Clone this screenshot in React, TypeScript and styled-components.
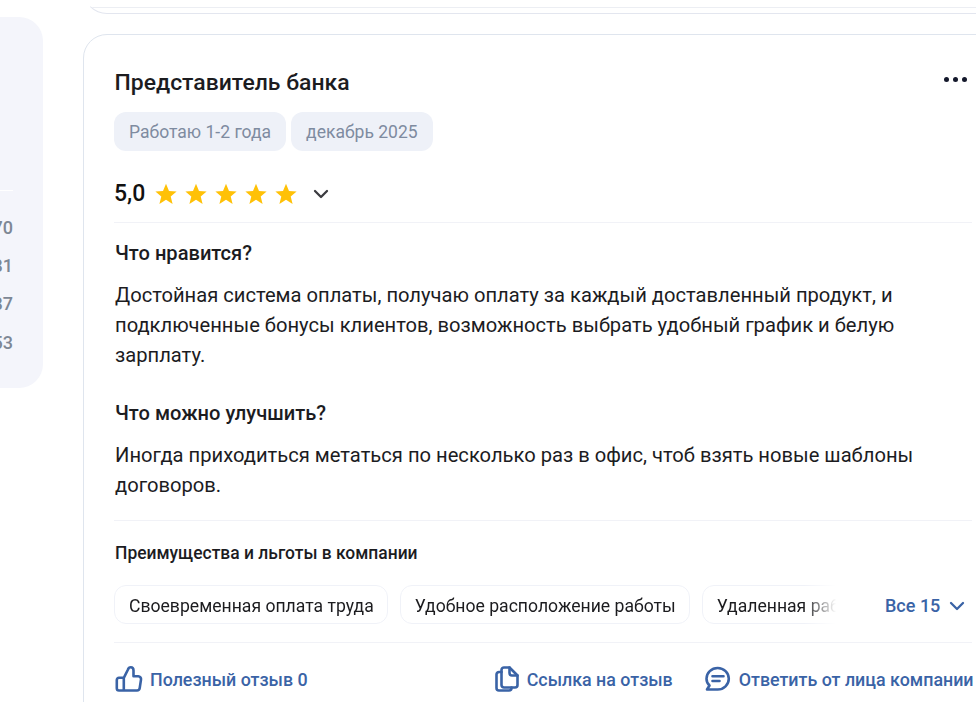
import React from "react";
import styled, { createGlobalStyle } from "styled-components";

const Global = createGlobalStyle`
  html, body { margin: 0; padding: 0; background: #fff; }
  body { font-family: Roboto, "Noto Sans", sans-serif; overflow: hidden; }
`;
const Page = styled.div`
  width: 976px; height: 702px; overflow: hidden; display: flex; align-items: flex-start; background: #fff;
`;
const Side = styled.aside`
  flex: none; width: 43px; height: 371px; margin-top: 17px; background: #f4f5fb;
  border-radius: 0 24px 24px 0; display: flex; flex-direction: column; align-items: flex-end;
  padding: 173px 0 0; box-sizing: border-box; overflow: hidden;
`;
const SideRule = styled.div`
  height: 1px; background: #fff; width: 13px; align-self: flex-start;
`;
const SideNums = styled.div`
  align-self: flex-start; width: 13px; display: flex; flex-direction: column; align-items: flex-end; margin-top: 18px;
`;
const SideNum = styled.div`
  font-size: 18px; font-weight: 500; line-height: 38.2px; height: 38.2px; color: #7d8795; white-space: nowrap;
  width: 13px; display: flex; justify-content: flex-end; overflow: hidden;
`;
const Main = styled.main`
  flex: none; width: 920px; margin-left: 40px; display: flex; flex-direction: column;
`;
const PrevCard = styled.div`
  height: 38px; margin-top: -24px; box-sizing: border-box; border: 1px solid #e3e6ef; border-top: 0; border-left-color: transparent;
  border-radius: 0 0 24px 24px; position: relative; overflow: hidden; display: flex; flex-direction: column; justify-content: flex-end;
`;
const PrevRule = styled.div`
  height: 1px; background: #eceef3; margin-bottom: 5px;
`;
const Card = styled.article`
  margin-top: 20px; box-sizing: border-box; border: 1px solid #dfe5ee; border-radius: 24px; padding: 30px 30px 0; height: 720px; background: #fff;
`;
const Head = styled.div`
  display: flex; justify-content: space-between; align-items: center; height: 34px;
`;
const Title = styled.h2`
  margin: 1px 0 0; padding-left: 0.5px; font-size: 22.95px; font-weight: 500; line-height: 34px; color: #1c1c1f;
`;
const Dots = styled.div`
  display: flex; gap: 3.8px; margin-right: 5px; margin-top: -5px;
`;
const Dot = styled.span`
  width: 5px; height: 5px; border-radius: 50%; background: #14182b;
`;
const Tags = styled.div`
  display: flex; gap: 5px; margin-top: 13px;
`;
const Tag = styled.span`
  height: 39px; display: flex; align-items: center; padding: 0 15px; border-radius: 12px; background: #eef1f8; font-size: 17.55px; color: #7e8ba0;
`;
const Rating = styled.div`
  display: flex; align-items: center; height: 32px; margin-top: 27px;
`;
const Score = styled.span`
  font-size: 23px; font-weight: 500; color: #111; width: 41px; line-height: 32px;
`;
const Stars = styled.div`
  display: flex; gap: 8px;
`;
const Caret = styled.svg<{ $m?: number }>`
  flex: none; margin-left: ${p => p.$m ?? 0}px;
`;
const Rule = styled.div<{ $top: number }>`
  height: 1px; background: #f1f2f7; margin-top: ${p => p.$top}px;
`;
const SectionTitle = styled.h3<{ $top: number }>`
  margin: ${p => p.$top}px 0 0; padding-left: 1px; font-size: 20.1px; font-weight: 500; line-height: 30px; color: #1c1c1f;
`;
const Body = styled.p`
  margin: 12px 0 0; padding-left: 1px; font-size: 20.16px; line-height: 30px; color: #1c1c1f;
`;
const Benefits = styled.h4`
  margin: 17px 0 0; padding-left: 1px; font-size: 17.45px; font-weight: 500; line-height: 30px; color: #1c1c1f;
`;
const ChipRow = styled.div`
  display: flex; align-items: center; margin-top: 17px; height: 39px;
`;
const ChipTrack = styled.div`
  width: 728px; display: flex; gap: 12px; overflow: hidden; flex: none;
  mask-image: linear-gradient(to right, #000 690px, transparent 722px);
`;
const Chip = styled.span`
  flex: none; height: 39px; box-sizing: border-box; border: 1px solid #f0f2f8; border-radius: 12px; padding: 2px 13px 0 14px; display: flex; align-items: center; font-size: 17.6px; color: #1c1c1f; white-space: nowrap;
`;
const More = styled.div`
  display: flex; align-items: center; margin-left: 43px; padding-top: 2px; font-size: 18px; font-weight: 500; color: #3a63a6;
`;
const Actions = styled.div`
  display: flex; align-items: center; margin-top: 19px; height: 34px;
`;
const Action = styled.div<{ $m: number; $gap: number }>`
  display: flex; align-items: center; gap: ${p => p.$gap}px; margin-left: ${p => p.$m}px; font-size: 17.85px; font-weight: 500; color: #3a63a6; white-space: nowrap;
`;

const Star = () => (
  <svg width="22" height="22" viewBox="0 0 22 22"><path fill="#ffc107" d="M11 .8l3 7.2 7.6.5-5.9 4.9 1.900 7.500L11 16.800l-6.600 4.100 1.900-7.500L.4 8.500 8 8z" /></svg>
);
const Chevron = ({ c, m }: { c: string; m: number }) => (
  <Caret $m={m} width="16" height="10" viewBox="0 0 16 10"><path d="M2 2l6 6 6-6" fill="none" stroke={c} strokeWidth="2.3" strokeLinecap="round" strokeLinejoin="round" /></Caret>
);
const Thumb = () => (
  <svg width="28" height="26" viewBox="0 0 28 26" fill="none" stroke="#3a63a6" strokeWidth="2.6" strokeLinejoin="round" strokeLinecap="round">
    <path d="M8.800 11.800H4A2.200 2.200 0 0 0 1.800 14v8.300a2.200 2.200 0 0 0 2.200 2.200h18a2.800 2.800 0 0 0 2.700-2.400l1.300-8.500a2.800 2.800 0 0 0-2.700-3.300H18.500V4.500C18.500 2.800 17.500 1.300 15.800 1.300 14.400 1.300 13.400 2.200 13 3.500L8.800 11.800v12.700" />
  </svg>
);
const Copy = () => (
  <svg width="24" height="26" viewBox="0 0 24 26" fill="none" stroke="#3a63a6" strokeWidth="2.6" strokeLinejoin="round" strokeLinecap="round">
    <path d="M6.500 6H4A2.500 2.500 0 0 0 1.500 8.500V22A2.500 2.500 0 0 0 4 24.500h10A2.500 2.500 0 0 0 16.500 22v-.5" />
    <path d="M14.500 1.500H9A2.500 2.500 0 0 0 6.500 4v15A2.500 2.500 0 0 0 9 21.500h11a2.500 2.500 0 0 0 2.500-2.500V9.500z" />
    <path d="M14.500 1.500V7a2.500 2.500 0 0 0 2.500 2.500h5.500" />
  </svg>
);
const Bubble = () => (
  <svg width="26" height="26" viewBox="0 0 26 26" fill="none" stroke="#3a63a6" strokeWidth="2.6" strokeLinejoin="round" strokeLinecap="round">
    <path d="M12.700 2C18.800 2 23.800 6.800 23.800 12.700S18.800 23.500 12.700 23.500H2L4.500 19.500C2.500 17.600 1.500 15.200 1.500 12.700 1.500 6.800 6.500 2 12.700 2z" />
    <path d="M7.500 10.300h11M7.500 15h7" />
  </svg>
);

export default function App() {
  return (
    <Page>
      <Global />
      <Side>
        <SideRule />
        <SideNums>
          {["70", "81", "87", "53"].map(n => <SideNum key={n}>{n}</SideNum>)}
        </SideNums>
      </Side>
      <Main>
        <PrevCard><PrevRule /></PrevCard>
        <Card>
          <Head>
            <Title>Представитель банка</Title>
            <Dots><Dot /><Dot /><Dot /></Dots>
          </Head>
          <Tags>
            <Tag>Работаю 1-2 года</Tag>
            <Tag>декабрь 2025</Tag>
          </Tags>
          <Rating>
            <Score>5,0</Score>
            <Stars>{[0, 1, 2, 3, 4].map(i => <Star key={i} />)}</Stars>
            <Chevron c="#3c3c40" m={16} />
          </Rating>
          <Rule $top={12} />
          <SectionTitle $top={15}>Что нравится?</SectionTitle>
          <Body>Достойная система оплаты, получаю оплату за каждый доставленный продукт, и подключенные бонусы клиентов, возможность выбрать удобный график и белую зарплату.</Body>
          <SectionTitle $top={28}>Что можно улучшить?</SectionTitle>
          <Body>Иногда приходиться метаться по несколько раз в офис, чтоб взять новые шаблоны договоров.</Body>
          <Rule $top={20} />
          <Benefits>Преимущества и льготы в компании</Benefits>
          <ChipRow>
            <ChipTrack>
              <Chip>Своевременная оплата труда</Chip>
              <Chip>Удобное расположение работы</Chip>
              <Chip>Удаленная работа</Chip>
            </ChipTrack>
            <More>Все 15<Chevron c="#3a63a6" m={9} /></More>
          </ChipRow>
          <Rule $top={18} />
          <Actions>
            <Action $m={1} $gap={7}><Thumb />Полезный отзыв 0</Action>
            <Action $m={187} $gap={8}><Copy />Ссылка на отзыв</Action>
            <Action $m={32} $gap={8}><Bubble />Ответить от лица компании</Action>
          </Actions>
        </Card>
      </Main>
    </Page>
  );
}
